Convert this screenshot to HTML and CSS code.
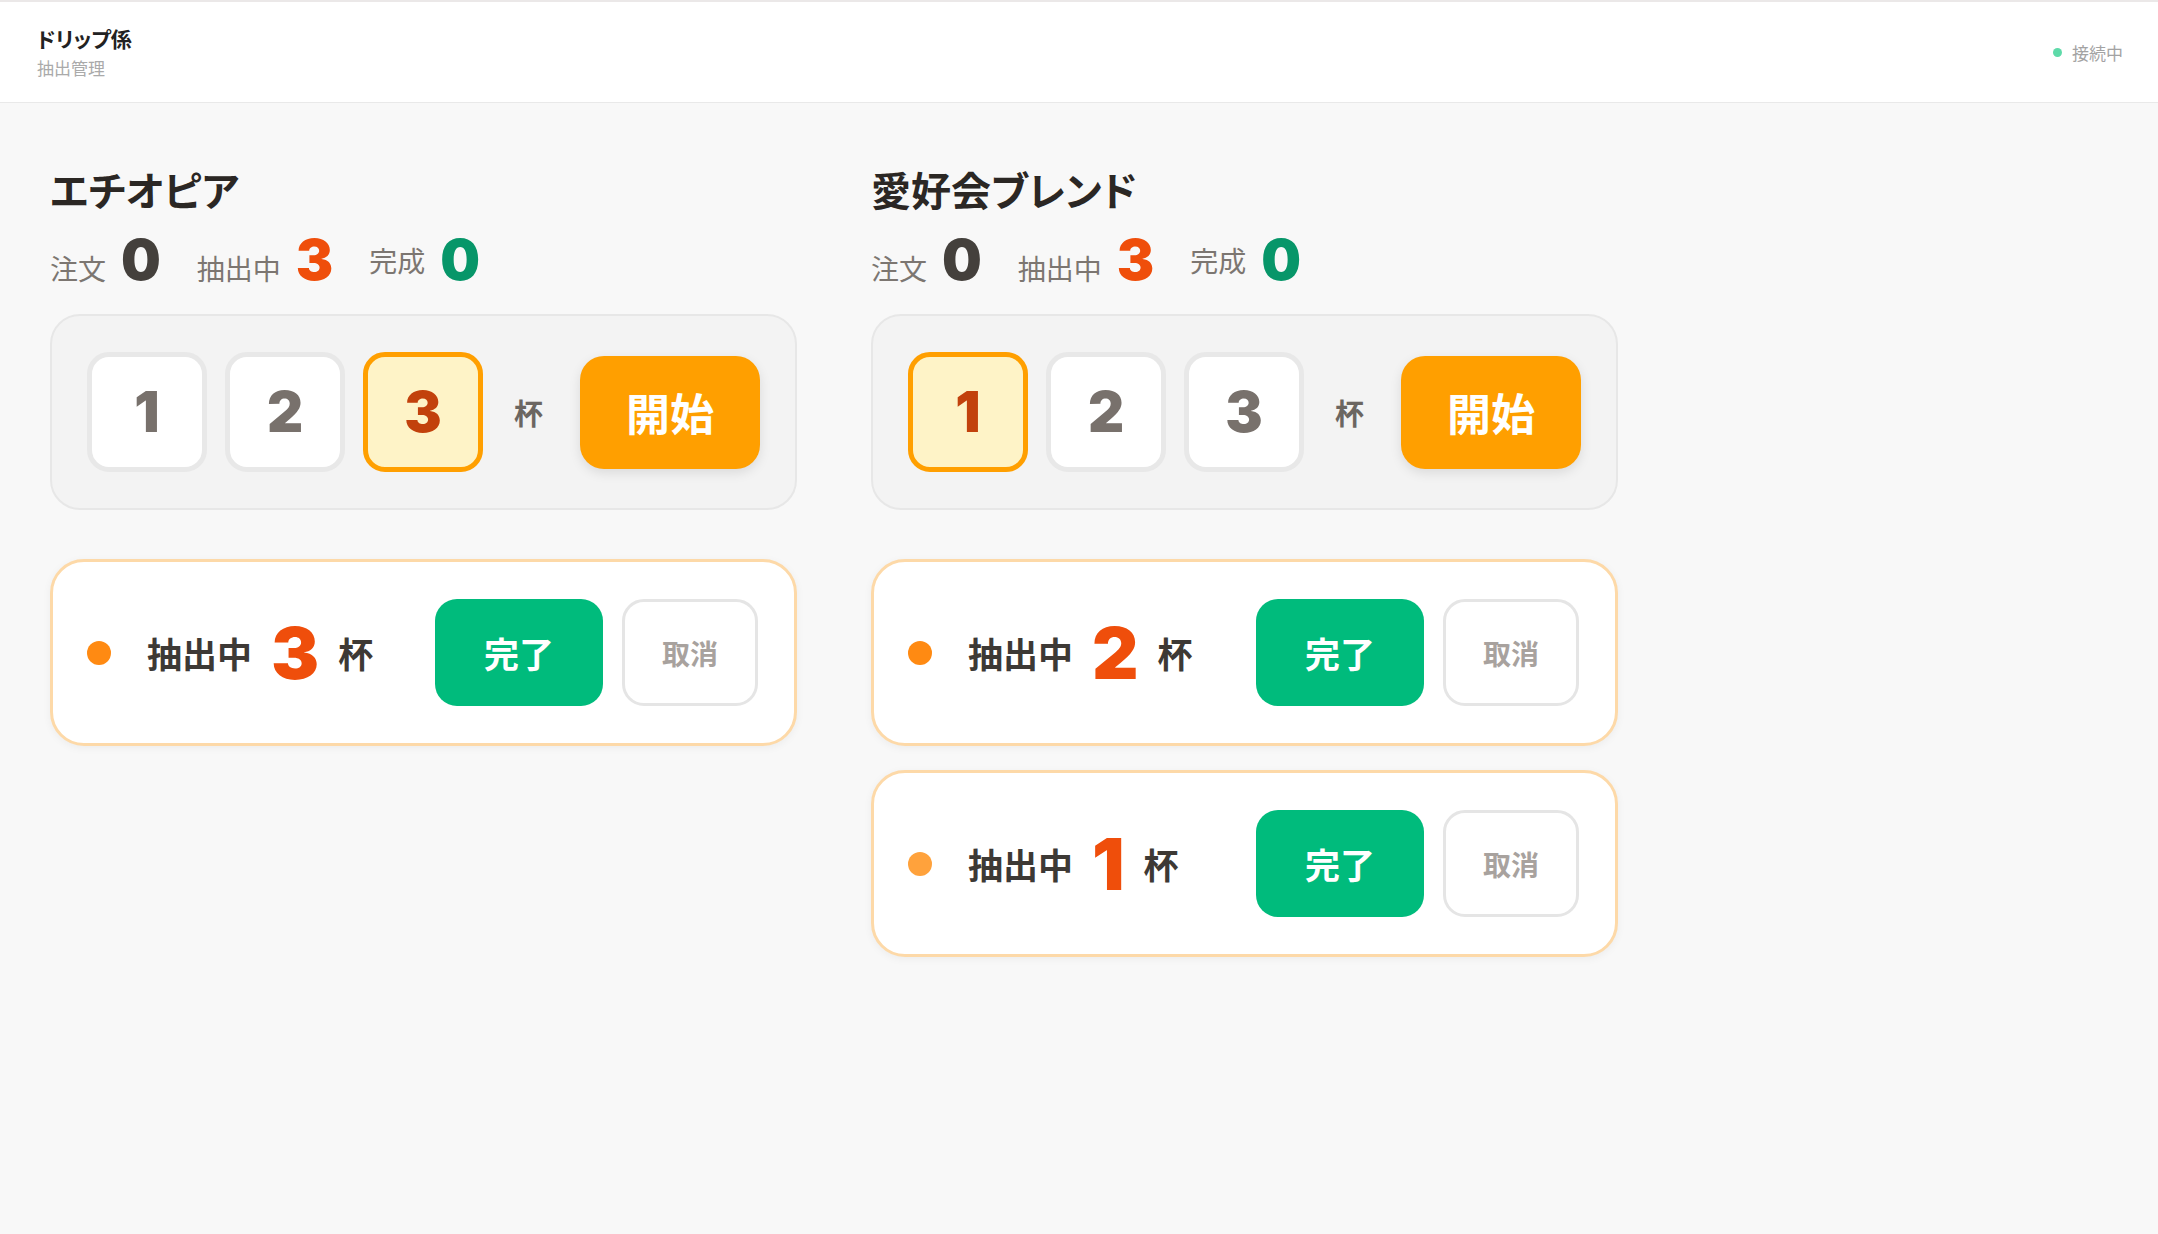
FILE: index.html
```html
<!DOCTYPE html>
<html lang="ja">
<head>
<meta charset="utf-8">
<title>ドリップ係</title>
<link rel="stylesheet" href="styles.css">
</head>
<body>
<div class="header">
  <div class="brand">
    <div class="brand-title">ドリップ係</div>
    <div class="brand-sub">抽出管理</div>
  </div>
  <div class="status"><span class="status-dot"></span>接続中</div>
</div>

<div class="main">
  <!-- エチオピア -->
  <div class="column">
    <h2 class="bean-name">エチオピア</h2>
    <div class="stats">
      <div class="stat"><span class="stat-label">注文</span><span class="stat-num">0</span></div>
      <div class="stat"><span class="stat-label">抽出中</span><span class="stat-num brewing">3</span></div>
      <div class="stat stat-center"><span class="stat-label">完成</span><span class="stat-num done">0</span></div>
    </div>
    <div class="picker">
      <div class="cups">
        <div class="cup">1</div>
        <div class="cup">2</div>
        <div class="cup selected">3</div>
      </div>
      <span class="cup-unit">杯</span>
      <div class="start-btn">開始</div>
    </div>
    <div class="orders">
      <div class="order">
        <span class="order-dot"></span>
        <span class="order-label">抽出中</span>
        <span class="order-num">3</span>
        <span class="order-unit">杯</span>
        <div class="order-actions">
          <div class="done-btn">完了</div>
          <div class="cancel-btn">取消</div>
        </div>
      </div>
    </div>
  </div>

  <!-- 愛好会ブレンド -->
  <div class="column">
    <h2 class="bean-name">愛好会ブレンド</h2>
    <div class="stats">
      <div class="stat"><span class="stat-label">注文</span><span class="stat-num">0</span></div>
      <div class="stat"><span class="stat-label">抽出中</span><span class="stat-num brewing">3</span></div>
      <div class="stat stat-center"><span class="stat-label">完成</span><span class="stat-num done">0</span></div>
    </div>
    <div class="picker">
      <div class="cups">
        <div class="cup selected">1</div>
        <div class="cup">2</div>
        <div class="cup">3</div>
      </div>
      <span class="cup-unit">杯</span>
      <div class="start-btn">開始</div>
    </div>
    <div class="orders">
      <div class="order">
        <span class="order-dot"></span>
        <span class="order-label">抽出中</span>
        <span class="order-num">2</span>
        <span class="order-unit">杯</span>
        <div class="order-actions">
          <div class="done-btn">完了</div>
          <div class="cancel-btn">取消</div>
        </div>
      </div>
      <div class="order">
        <span class="order-dot faded"></span>
        <span class="order-label">抽出中</span>
        <span class="order-num">1</span>
        <span class="order-unit">杯</span>
        <div class="order-actions">
          <div class="done-btn">完了</div>
          <div class="cancel-btn">取消</div>
        </div>
      </div>
    </div>
  </div>
</div>
</body>
</html>
```

FILE: styles.css
```css
html, body {
  margin: 0;
  padding: 0;
}
body {
  background: #f8f8f8;
  font-family: "Noto Sans CJK JP", "Noto Sans", sans-serif;
  font-feature-settings: "palt";
  color: #2b2724;
}

/* ヘッダー */
.header {
  display: flex;
  justify-content: space-between;
  align-items: center;
  height: 100px;
  padding: 0 35px 0 37px;
  background: #fff;
  border-top: 2px solid #ebe8e8;
  border-bottom: 1px solid #e9e9e9;
}
.brand-title {
  font-size: 21px;
  font-weight: 700;
  line-height: 1.3;
  color: #222;
}
.brand-sub {
  font-size: 17px;
  line-height: 1.3;
  color: #aaa;
  margin-top: 4px;
}
.status {
  display: flex;
  align-items: center;
  gap: 10px;
  font-size: 17px;
  color: #a3a3a3;
}
.status-dot {
  width: 9px;
  height: 9px;
  border-radius: 50%;
  background: #5edaa9;
}

/* メイン */
.main {
  display: flex;
  align-items: flex-start;
  gap: 74px;
  padding: 60px 50px;
}
.column {
  width: 747px;
}
.bean-name {
  margin: 0;
  font-size: 40px;
  font-weight: 700;
  line-height: 1.3;
  color: #2b2724;
}

.stats {
  display: flex;
  align-items: center;
  gap: 36px;
  margin-top: 17px;
}
.stat {
  display: flex;
  align-items: baseline;
  gap: 15px;
}
.stat-center {
  align-items: center;
}
.stat-label {
  font-size: 28px;
  line-height: 1;
  color: #7c7671;
}
.stat-num {
  font-family: "Inter", "Liberation Sans", sans-serif;
  font-size: 56px;
  font-weight: 900;
  line-height: 1;
  color: #44403c;
}
.stat-num.brewing { color: #ef4e0b; }
.stat-num.done { color: #079669; }

/* 杯数の選択 */
.picker {
  display: flex;
  align-items: center;
  margin-top: 26px;
  padding: 36px 35px;
  background: #f3f3f3;
  border: 2px solid #e7e7e7;
  border-radius: 30px;
}
.cups {
  display: flex;
  gap: 18px;
}
.cup {
  box-sizing: border-box;
  width: 120px;
  height: 120px;
  display: flex;
  align-items: center;
  justify-content: center;
  background: #fff;
  border: 5px solid #e8e8e8;
  border-radius: 22px;
  font-family: "Inter", "Liberation Sans", sans-serif;
  font-size: 56px;
  font-weight: 900;
  color: #78716c;
}
.cup.selected {
  background: #fef3c7;
  border-color: #ff9f00;
  color: #c2410c;
}
.cup-unit {
  margin: 0 37px 0 31px;
  font-size: 29px;
  font-weight: 700;
  color: #6b6661;
}
.start-btn {
  width: 180px;
  height: 113px;
  display: flex;
  align-items: center;
  justify-content: center;
  background: #ff9f00;
  border-radius: 24px;
  box-shadow: 0 4px 12px rgba(0, 0, 0, 0.1);
  color: #fff;
  font-size: 44px;
  font-weight: 700;
}

/* 抽出中リスト */
.orders {
  display: flex;
  flex-direction: column;
  gap: 24px;
  margin-top: 49px;
}
.order {
  display: flex;
  align-items: center;
  padding: 37px 36px 37px 34px;
  background: #fff;
  border: 3px solid #fdd9a8;
  border-radius: 34px;
  box-shadow: 0 2px 8px rgba(0, 0, 0, 0.05);
}
.order-dot {
  width: 24px;
  height: 24px;
  border-radius: 50%;
  background: #ff8a12;
}
.order-dot.faded {
  background: #ffa23c;
}
.order-label {
  margin-left: 36px;
  font-size: 35px;
  font-weight: 700;
  color: #3d3935;
}
.order-num {
  margin: 0 19px;
  font-family: "Inter", "Liberation Sans", sans-serif;
  font-size: 72px;
  font-weight: 900;
  line-height: 1;
  color: #ef4e0b;
}
.order-unit {
  font-size: 35px;
  font-weight: 700;
  color: #3d3935;
}
.order-actions {
  display: flex;
  gap: 19px;
  margin-left: auto;
}
.done-btn, .cancel-btn {
  box-sizing: border-box;
  height: 107px;
  display: flex;
  align-items: center;
  justify-content: center;
  border-radius: 22px;
  font-weight: 700;
}
.done-btn {
  width: 168px;
  background: #00bb7c;
  color: #fff;
  font-size: 35px;
}
.cancel-btn {
  width: 136px;
  background: #fff;
  border: 3px solid #e5e5e5;
  color: #a8a29e;
  font-size: 28px;
}
```
